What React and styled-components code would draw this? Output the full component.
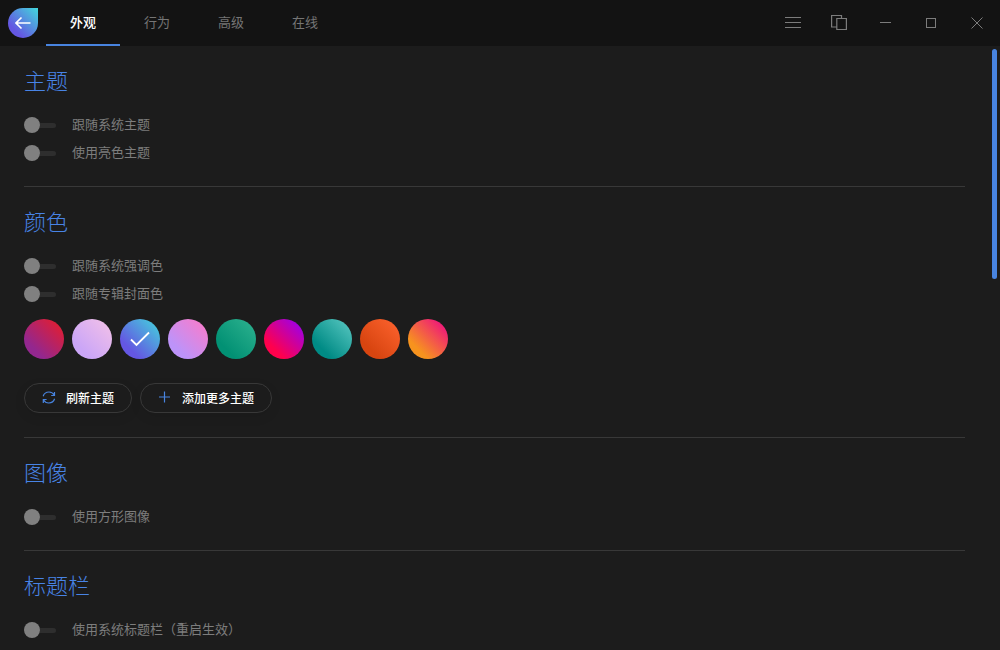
import { useState } from 'react';
import styled, { createGlobalStyle } from 'styled-components';

const GlobalStyle = createGlobalStyle`
  * {
    box-sizing: border-box;
  }
  body {
    margin: 0;
    background: #1c1c1c;
    font-family: "Noto Sans CJK SC", "Noto Sans", sans-serif;
    overflow: hidden;
  }
  button {
    font-family: inherit;
    cursor: pointer;
  }
`;

const Page = styled.div`
  display: flex;
  flex-direction: column;
  height: 100vh;
  color: #808080;
`;

const TitleBar = styled.header`
  display: flex;
  align-items: center;
  flex: none;
  height: 46px;
  padding-left: 8px;
  background: #131313;
`;

const BackButton = styled.button`
  display: flex;
  align-items: center;
  justify-content: center;
  width: 30px;
  height: 30px;
  margin-right: 8px;
  padding: 0;
  border: none;
  border-radius: 50% 0 50% 50%;
  background: linear-gradient(45deg, #6457e2 25%, #42d8dc);
  color: white;
`;

const Tabs = styled.nav`
  display: flex;
  flex: 1;
  height: 100%;
`;

const Tab = styled.button`
  padding: 0 24px;
  border: none;
  border-bottom: 2px solid ${({ $active }) => ($active ? '#4884e0' : 'transparent')};
  background: none;
  color: ${({ $active }) => ($active ? '#ffffff' : '#757575')};
  font-size: 13px;
  font-weight: ${({ $active }) => ($active ? 500 : 400)};
  line-height: 20px;
`;

const WindowButton = styled.button`
  display: flex;
  align-items: center;
  justify-content: center;
  width: 46px;
  height: 46px;
  padding: 0;
  border: none;
  background: none;
  color: #7c7c7c;
`;

const Content = styled.main`
  position: relative;
  flex: 1;
  min-height: 0;
`;

const ScrollArea = styled.div`
  height: 100%;
  padding: 0 35px 0 24px;
  overflow: hidden;
`;

const ScrollThumb = styled.div`
  position: absolute;
  top: 3px;
  right: 3px;
  width: 5px;
  height: 38%;
  border-radius: 3px;
  background: #4884e0;
`;

const Section = styled.section`
  padding: 21px 0 24px;
  border-bottom: 1px solid #383838;
`;

const SectionTitle = styled.h2`
  margin: 0 0 25px;
  color: #4884e6;
  font-size: 22px;
  font-weight: 300;
  line-height: 24px;
`;

const Options = styled.div`
  display: flex;
  flex-direction: column;
  align-items: flex-start;
  gap: 10px;
`;

const OptionLabel = styled.label`
  display: flex;
  align-items: center;
  gap: 16px;
  color: #7d7d7d;
  font-size: 13px;
  line-height: 16px;
  cursor: pointer;

  span {
    padding-bottom: 2px;
  }
`;

const Switch = styled.input`
  appearance: none;
  display: flex;
  align-items: center;
  width: 32px;
  height: 16px;
  margin: 0;
  cursor: pointer;

  /* knob */
  &::before {
    content: '';
    order: 1;
    width: 16px;
    height: 16px;
    border-radius: 50%;
    background: #808080;
  }

  /* visible part of the track */
  &::after {
    content: '';
    order: 2;
    flex: 1;
    height: 5px;
    border-radius: 0 3px 3px 0;
    background: #2e2e2e;
  }

  &:checked::before {
    order: 3;
    background: #4884e0;
  }
  &:checked::after {
    border-radius: 3px 0 0 3px;
  }
`;

const Swatches = styled.div`
  display: flex;
  flex-wrap: wrap;
  gap: 8px;
  margin-top: 16px;
`;

const Swatch = styled.button`
  display: flex;
  align-items: center;
  justify-content: center;
  width: 40px;
  height: 40px;
  padding: 0;
  border: none;
  border-radius: 50%;
  background: linear-gradient(45deg, ${({ $from }) => $from} 25%, ${({ $to }) => $to});
  color: white;
`;

const Actions = styled.div`
  display: flex;
  gap: 8px;
  margin-top: 24px;
`;

const ActionButton = styled.button`
  display: flex;
  align-items: center;
  gap: 10px;
  height: 30px;
  padding: 0 17px;
  border: 1px solid #383838;
  border-radius: 15px;
  background: none;
  box-shadow: 0 4px 12px rgba(0, 0, 0, 0.08);
  color: white;
  font-size: 12px;
  font-weight: 500;
  line-height: 18px;

  svg {
    color: #4884e0;
  }
`;

const tabs = ['外观', '行为', '高级', '在线'];

const colors = [
  { name: '酒红', from: '#93278f', to: '#ed1c24' },
  { name: '浅紫', from: '#cba6f7', to: '#f5c2e7' },
  { name: '蓝色', from: '#6457e2', to: '#42d8dc' },
  { name: '粉色', from: '#bd93f9', to: '#ff79c6' },
  { name: '绿色', from: '#029174', to: '#2fb390' },
  { name: '品红', from: '#ff004c', to: '#8f00ff' },
  { name: '青色', from: '#008b85', to: '#5ccac4' },
  { name: '橙色', from: '#d84510', to: '#ff6430' },
  { name: '日落', from: '#f7931e', to: '#ed008c' },
];

const Option = ({ children }) => (
  <OptionLabel>
    <Switch type="checkbox" />
    <span>{children}</span>
  </OptionLabel>
);

const BackIcon = () => (
  <svg width="16" height="14" viewBox="0 0 16 14" fill="none" stroke="currentColor" strokeWidth="1.6">
    <path d="M15.5 7H1M6.5 1.5L1 7L6.5 12.5" />
  </svg>
);

const MenuIcon = () => (
  <svg width="16" height="12" viewBox="0 0 16 12" fill="none" stroke="currentColor">
    <path d="M0 .5H16M0 5.5H16M0 10.5H16" />
  </svg>
);

const CompactIcon = () => (
  <svg width="16" height="16" viewBox="0 0 16 16" fill="none" stroke="currentColor" strokeWidth="1.2">
    <path d="M5.5 12H.6V.5H10.5V3.5M5.8 3.5H15.4V14.5H5.8Z" />
  </svg>
);

const MinimizeIcon = () => (
  <svg width="12" height="10" viewBox="0 0 12 10" fill="none" stroke="currentColor">
    <path d="M1 4.5H12" />
  </svg>
);

const MaximizeIcon = () => (
  <svg width="10" height="10" viewBox="0 0 10 10" fill="none" stroke="currentColor">
    <rect x=".5" y=".5" width="9" height="9" />
  </svg>
);

const CloseIcon = () => (
  <svg width="12" height="12" viewBox="0 0 12 12" fill="none" stroke="currentColor">
    <path d="M.5 .5L11.5 11.5M11.5 .5L.5 11.5" />
  </svg>
);

const CheckIcon = () => (
  <svg width="20" height="16" viewBox="0 0 20 16" fill="none" stroke="currentColor" strokeWidth="1.8">
    <path d="M1 8.5L6.5 14L19 1.5" />
  </svg>
);

const RefreshIcon = () => (
  <svg width="14" height="14" viewBox="0 0 14 14" fill="none" stroke="currentColor" strokeWidth="1.2">
    <path d="M1.2 5.2C2 2.6 4.2 1 7 1C9.4 1 11.3 2.2 12.4 4.2M12.5 1V4.5H9.2" />
    <path d="M12.6 7.8C11.8 10.4 9.6 12 6.8 12C4.4 12 2.5 10.8 1.4 8.8M1.3 12V8.5H4.6" />
  </svg>
);

const PlusIcon = () => (
  <svg width="14" height="14" viewBox="0 0 14 14" fill="none" stroke="currentColor" strokeWidth="1.2">
    <path d="M6.5 .5V11.5M1 6H12" />
  </svg>
);

const windowButtons = [
  { label: '菜单', Icon: MenuIcon },
  { label: '迷你模式', Icon: CompactIcon },
  { label: '最小化', Icon: MinimizeIcon },
  { label: '最大化', Icon: MaximizeIcon },
  { label: '关闭', Icon: CloseIcon },
];

const App = () => {
  const [activeTab, setActiveTab] = useState(0);
  const [activeColor, setActiveColor] = useState(2);

  return (
    <>
      <GlobalStyle />
      <Page>
        <TitleBar>
          <BackButton aria-label="返回">
            <BackIcon />
          </BackButton>
          <Tabs>
            {tabs.map((tab, index) => (
              <Tab key={tab} $active={index === activeTab} onClick={() => setActiveTab(index)}>
                {tab}
              </Tab>
            ))}
          </Tabs>
          {windowButtons.map(({ label, Icon }) => (
            <WindowButton key={label} aria-label={label}>
              <Icon />
            </WindowButton>
          ))}
        </TitleBar>

        <Content>
          <ScrollArea>
            <Section>
              <SectionTitle>主题</SectionTitle>
              <Options>
                <Option>跟随系统主题</Option>
                <Option>使用亮色主题</Option>
              </Options>
            </Section>

            <Section>
              <SectionTitle>颜色</SectionTitle>
              <Options>
                <Option>跟随系统强调色</Option>
                <Option>跟随专辑封面色</Option>
              </Options>
              <Swatches>
                {colors.map((color, index) => (
                  <Swatch
                    key={color.name}
                    aria-label={color.name}
                    $from={color.from}
                    $to={color.to}
                    onClick={() => setActiveColor(index)}
                  >
                    {index === activeColor && <CheckIcon />}
                  </Swatch>
                ))}
              </Swatches>
              <Actions>
                <ActionButton>
                  <RefreshIcon />
                  刷新主题
                </ActionButton>
                <ActionButton>
                  <PlusIcon />
                  添加更多主题
                </ActionButton>
              </Actions>
            </Section>

            <Section>
              <SectionTitle>图像</SectionTitle>
              <Options>
                <Option>使用方形图像</Option>
              </Options>
            </Section>

            <Section>
              <SectionTitle>标题栏</SectionTitle>
              <Options>
                <Option>使用系统标题栏（重启生效）</Option>
              </Options>
            </Section>
          </ScrollArea>
          <ScrollThumb />
        </Content>
      </Page>
    </>
  );
};

export default App;
